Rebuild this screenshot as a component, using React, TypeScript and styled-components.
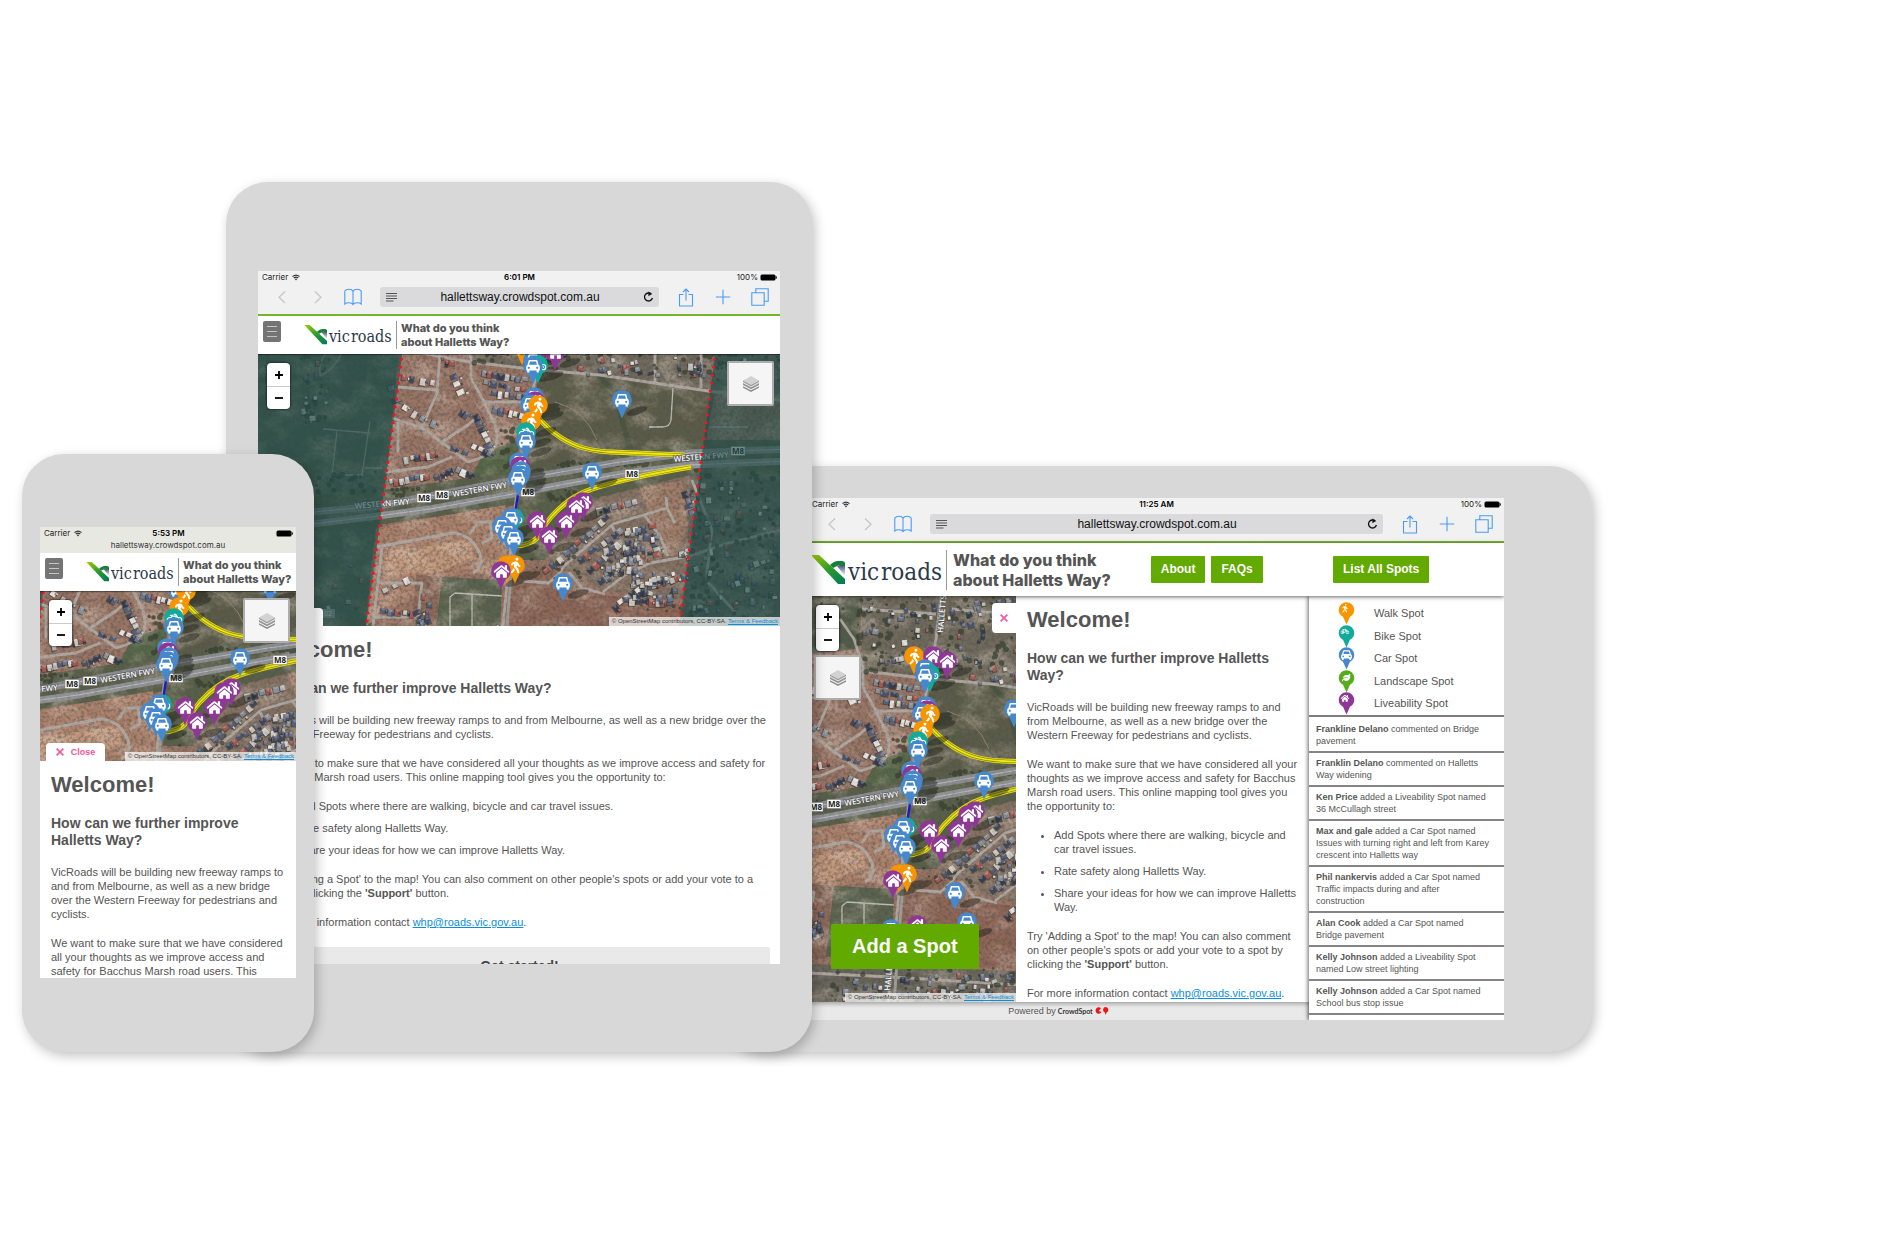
import React, { useId } from 'react';
import styled, { createGlobalStyle } from 'styled-components';
import { FaHome, FaBicycle, FaWalking, FaLeaf } from 'react-icons/fa';

const sans = `'Liberation Sans', Arial, sans-serif`;
const system = `Inter, Roboto, 'Liberation Sans', sans-serif`;
const green = '#62a900';

const GlobalStyle = createGlobalStyle`
  *, *::before, *::after { box-sizing: border-box; }
  body { margin: 0; background: #fff; color: #555; font-family: ${sans}; }
  button, input { font: inherit; margin: 0; }
  button { cursor: pointer; border: 0; padding: 0; }
`;

/* ---------- device frames ---------- */

const Stage = styled.main`
  display: flex;
  align-items: flex-end;
  padding: 182px 22px 198px;
  overflow: hidden;
`;

const Device = styled.section<{ $width: number; $pad: string; $overlap?: number; $layer: number }>`
  position: relative;
  z-index: ${p => p.$layer};
  flex: 0 1 ${p => p.$width}px;
  min-width: 0;
  margin-left: ${p => -(p.$overlap ?? 0)}px;
  padding: ${p => p.$pad};
  border-radius: 42px;
  background: #d8d8d8;
  box-shadow: 3px 4px 12px rgba(0, 0, 0, 0.24);
`;

const Screen = styled.div<{ $height: number }>`
  display: flex;
  flex-direction: column;
  height: ${p => p.$height}px;
  overflow: hidden;
  background: #fff;
`;

/* ---------- browser chrome ---------- */

const StatusBar = styled.div<{ $tint?: string }>`
  display: grid;
  grid-template-columns: 1fr auto 1fr;
  align-items: center;
  flex: none;
  height: 13px;
  padding: 0 3px 0 4px;
  background: ${p => p.$tint ?? '#f1f1f1'};
  color: #222;
  font: 400 8px/13px ${system};
`;

const Carrier = styled.span`
  display: flex;
  align-items: center;
  gap: 4px;
`;

const Clock = styled.span`
  font-weight: 600;
  color: #000;
`;

const Battery = styled.span`
  display: flex;
  align-items: center;
  justify-content: flex-end;
  gap: 2px;
`;

const Toolbar = styled.div`
  display: flex;
  align-items: center;
  flex: none;
  padding: 3px 11px 7px 15px;
  background: #f1f1f1;
  border-bottom: 2px solid #74b52c;
  box-sizing: content-box;
  height: 20px;
`;

const ToolGroup = styled.div<{ $end?: boolean }>`
  display: flex;
  align-items: center;
  justify-content: space-between;
  width: ${p => (p.$end ? 91 : 89)}px;
  margin: ${p => (p.$end ? '0 0 0 19px' : '0 18px 0 0')};
`;

const ToolButton = styled.button`
  display: flex;
  background: none;
  color: #4a9bf5;
  &:disabled { color: #c6c6c6; }
`;

const Address = styled.form`
  display: flex;
  align-items: center;
  flex: 1;
  min-width: 0;
  height: 20px;
  padding: 0 5px 0 6px;
  border-radius: 3px;
  background: #dadadc;
`;

const AddressInput = styled.input`
  flex: 1;
  min-width: 0;
  border: 0;
  padding: 0;
  background: none;
  text-align: center;
  color: #111;
  font: 400 12px/20px ${sans};
`;

const PhoneAddress = styled.div`
  flex: none;
  height: 13px;
  background: #e8e8e2;
  color: #333;
  text-align: center;
  font: 400 8px/10px ${system};
`;

const WifiIcon = () => (
  <svg width="8" height="7" viewBox="0 0 16 13" aria-hidden="true">
    <g fill="none" stroke="#333" strokeWidth="2.2">
      <path d="M1 4.6Q8-1.2 15 4.6" />
      <path d="M3.6 7.6Q8 4 12.4 7.6" />
    </g>
    <path d="M5.6 9.6Q8 7.8 10.4 9.6L8 12.4Z" fill="#333" />
  </svg>
);

const BatteryIcon = () => (
  <svg width="17" height="7" viewBox="0 0 17 7" aria-hidden="true">
    <rect x="0.5" y="0.5" width="15" height="6" rx="1.5" fill="#000" />
    <path d="M16 2.3Q17 3.5 16 4.7Z" fill="#000" stroke="#000" strokeWidth=".6" />
  </svg>
);

const Chevron = ({ flip }: { flip?: boolean }) => (
  <svg width="17" height="16" viewBox="0 0 17 16" fill="none" stroke="currentColor" strokeWidth="1.3" aria-hidden="true">
    <path d={flip ? 'M6 2.5L12 8.3L6 14' : 'M12 2.5L6 8.3L12 14'} />
  </svg>
);

const BookIcon = () => (
  <svg width="18" height="18" viewBox="0 0 18 18" fill="none" stroke="currentColor" strokeWidth="1.1" aria-hidden="true">
    <path d="M9 3.2Q8 1.2 5 1.2T.8 3V16Q2 14.8 5 14.8T9 16.6Q10 14.8 13 14.8T17.2 16V3Q16 1.2 13 1.2T9 3.2V16.6" />
  </svg>
);

const ReaderIcon = () => (
  <svg width="11" height="9" viewBox="0 0 11 9" stroke="#555" strokeWidth="1" aria-hidden="true">
    <path d="M0 .5H11M0 3H11M0 5.5H11M0 8H7.5" />
  </svg>
);

const ReloadIcon = () => (
  <svg width="11" height="12" viewBox="0 0 11 12" fill="none" stroke="#111" strokeWidth="1.3" aria-hidden="true">
    <path d="M8.4 3.2A4 4 0 1 0 9.4 7" />
    <path d="M5.4.6L8.8 3.1L5.4 5.2Z" fill="#111" stroke="none" />
  </svg>
);

const ShareIcon = () => (
  <svg width="16" height="19" viewBox="0 0 16 19" fill="none" stroke="currentColor" strokeWidth="1.1" aria-hidden="true">
    <path d="M5.5 6.5H1.5V18H14.5V6.5H10.5M8 12.5V1.2M5 4L8 1L11 4" />
  </svg>
);

const PlusIcon = () => (
  <svg width="16" height="16" viewBox="0 0 16 16" stroke="currentColor" strokeWidth="1.1" aria-hidden="true">
    <path d="M8 .8V15.2M.8 8H15.2" />
  </svg>
);

const TabsIcon = () => (
  <svg width="18" height="18" viewBox="0 0 18 18" fill="none" stroke="currentColor" strokeWidth="1.1" aria-hidden="true">
    <path d="M.8 4.8H13.2V17.2H.8ZM4.8 4.8V.8H17.2V13.2H13.2" />
  </svg>
);

function BrowserBar({ time }: { time: string }) {
  const id = useId();
  return (
    <>
      <StatusBar>
        <Carrier>Carrier <WifiIcon /></Carrier>
        <Clock>{time}</Clock>
        <Battery>100% <BatteryIcon /></Battery>
      </StatusBar>
      <Toolbar>
        <ToolGroup>
          <ToolButton disabled aria-label="Back"><Chevron /></ToolButton>
          <ToolButton disabled aria-label="Forward"><Chevron flip /></ToolButton>
          <ToolButton aria-label="Bookmarks"><BookIcon /></ToolButton>
        </ToolGroup>
        <Address onSubmit={e => e.preventDefault()}>
          <ReaderIcon />
          <AddressInput id={id} aria-label="Address" defaultValue="hallettsway.crowdspot.com.au" />
          <ToolButton type="button" aria-label="Reload"><ReloadIcon /></ToolButton>
        </Address>
        <ToolGroup $end>
          <ToolButton aria-label="Share"><ShareIcon /></ToolButton>
          <ToolButton aria-label="New tab"><PlusIcon /></ToolButton>
          <ToolButton aria-label="Tabs"><TabsIcon /></ToolButton>
        </ToolGroup>
      </Toolbar>
    </>
  );
}

/* ---------- site header ---------- */

const Header = styled.header<{ $wide?: boolean }>`
  display: flex;
  align-items: center;
  flex: none;
  position: relative;
  z-index: 2;
  height: ${p => (p.$wide ? 53 : 38)}px;
  padding-left: ${p => (p.$wide ? 3 : 5)}px;
  background: #fff;
  box-shadow: 0 1px ${p => (p.$wide ? '4px rgba(0, 0, 0, 0.6)' : '1px rgba(0, 0, 0, 0.4)')};
`;

const MenuButton = styled.button`
  display: flex;
  align-items: center;
  justify-content: center;
  align-self: flex-start;
  width: 18px;
  height: 21px;
  margin: 5px 22px 0 0;
  border-radius: 2px;
  background: #747474;
`;

const Brand = styled.a<{ $wide?: boolean }>`
  display: flex;
  align-items: center;
  gap: ${p => (p.$wide ? 4 : 3)}px;
  color: #555;
  text-decoration: none;
`;

const BrandTitle = styled.h1<{ $wide?: boolean }>`
  margin: 0;
  padding-left: ${p => (p.$wide ? 6 : 4)}px;
  border-left: 1px solid #999;
  font: 800 ${p => (p.$wide ? '16px/20px' : '11px/14px')} ${system};
  white-space: nowrap;
`;

const HeaderNav = styled.nav`
  display: flex;
  flex: 1;
  gap: 6px;
  padding-left: 40px;
`;

const GreenButton = styled.button<{ $large?: boolean }>`
  padding: ${p => (p.$large ? '0 21px' : '0 10px')};
  border-radius: 1px;
  background: ${green};
  color: #fff;
  font: 700 ${p => (p.$large ? '20px/45px' : '12px/27px')} ${sans};
  white-space: nowrap;
`;

const HeaderEnd = styled.div`
  width: 171px;
`;

function Logo({ wide }: { wide?: boolean }) {
  const id = useId().replace(/:/g, '');
  return (
    <svg width={wide ? 131 : 90} height={wide ? 30 : 20} viewBox="0 0 131 30" role="img" aria-label="VicRoads">
      <defs>
        <linearGradient id={`${id}s`} x1="0" y1="0" x2="1" y2="1">
          <stop offset="0" stopColor="#a8cf00" />
          <stop offset=".5" stopColor="#2f9a2d" />
          <stop offset="1" stopColor="#00795a" />
        </linearGradient>
        <linearGradient id={`${id}f`} x1="0" y1="0" x2="0" y2="1">
          <stop offset="0" stopColor="#173a3c" />
          <stop offset=".4" stopColor="#7680a0" />
          <stop offset="1" stopColor="#ffffff" />
        </linearGradient>
      </defs>
      <path d="M26 11L34 8V21Z" fill={`url(#${id}f)`} />
      <path d="M19 10Q23 6 27 6H31Q34 6 34 9V10L28 10L22 13Z" fill="#15803a" />
      <path d="M0 0H8L34 24V29H27Z" fill={`url(#${id}s)`} />
      <g fill="#2b3a49" fontFamily="'DejaVu Serif Condensed', 'DejaVu Serif', serif" fontSize="24">
        <text x="37" y="25">vic</text>
        <text x="70" y="25">roads</text>
      </g>
    </svg>
  );
}

function SiteBrand({ wide }: { wide?: boolean }) {
  return (
    <Brand href="#home" $wide={wide}>
      <Logo wide={wide} />
      <BrandTitle $wide={wide}>What do you think<br />about Halletts Way?</BrandTitle>
    </Brand>
  );
}

const CompactHeader = () => (
  <Header>
    <MenuButton aria-label="Menu">
      <svg width="10" height="13" viewBox="0 0 10 13" stroke="#c4c4c4" strokeWidth="1.2" aria-hidden="true">
        <path d="M0 1.5H10M0 6.5H10M0 11.5H10" />
      </svg>
    </MenuButton>
    <SiteBrand />
  </Header>
);

/* ---------- pins ---------- */

type Kind = 'walk' | 'bike' | 'car' | 'leaf' | 'home';

const pinColour: Record<Kind, string> = {
  walk: '#f79500',
  bike: '#12aa9b',
  car: '#4788cc',
  leaf: '#56ad1b',
  home: '#8f3796',
};

const pinGlyph = { walk: FaWalking, bike: FaBicycle, leaf: FaLeaf, home: FaHome };
const glyphSize = { walk: 15, bike: 15, leaf: 12, home: 15 };

const CarGlyph = () => (
  <g>
    <path d="M-4.8-1L-3.6-5.2H3.6L4.8-1" fill="none" stroke="#fff" strokeWidth="1.5" strokeLinejoin="round" />
    <path d="M-5.2-1.2H5.2Q6.8-.6 6.8 1V4.6H5.8V6.4H3.6V4.6H-3.6V6.4H-5.8V4.6H-6.8V1Q-6.8-.6-5.2-1.2Z" fill="#fff" />
    <circle cx="-4.2" cy="1.8" r="1.1" fill={pinColour.car} />
    <circle cx="4.2" cy="1.8" r="1.1" fill={pinColour.car} />
  </g>
);

function PinShape({ kind }: { kind: Kind }) {
  let glyph = <CarGlyph />;
  if (kind !== 'car') {
    const Glyph = pinGlyph[kind];
    const s = glyphSize[kind];
    glyph = <Glyph x={-s / 2} y={-s / 2} width={s} height={s} color="#fff" />;
  }
  return (
    <>
      <path d="M-9.8 0A9.8 9.8 0 1 1 9.8 0Q9.6 6 4.4 8.6L0 18.5L-4.4 8.6Q-9.6 6-9.8 0Z" fill={pinColour[kind]} />
      {glyph}
    </>
  );
}

type Pin = [Kind, number, number];

const corridorPins: Pin[] = [
  ['walk', 522, 347], ['home', 541, 347], ['home', 555, 352], ['car', 533, 360], ['bike', 538, 365], ['car', 533, 366],
  ['car', 622, 400], ['car', 534, 397], ['home', 535, 401], ['car', 530, 404], ['walk', 538, 405], ['walk', 531, 421],
  ['bike', 526, 432], ['car', 526, 441], ['car', 519, 462], ['home', 520, 466], ['car', 521, 471], ['car', 520, 475],
  ['car', 518, 478], ['car', 592, 472], ['home', 583, 502], ['home', 576, 506], ['bike', 514, 518], ['car', 511, 518],
  ['home', 566, 521], ['home', 537, 521], ['car', 502, 526], ['car', 508, 532], ['home', 549, 536], ['car', 514, 538],
];

const midPins: Pin[] = [...corridorPins, ['walk', 507, 565], ['walk', 515, 565], ['home', 501, 571], ['car', 563, 583]];

const allPins: Pin[] = [...midPins, ['car', 575, 613], ['home', 525, 616], ['car', 499, 620]];

/* ---------- aerial map ---------- */

function random(seed: number) {
  let s = seed;
  return () => {
    s = (s * 16807) % 2147483647;
    return s / 2147483647;
  };
}

type Roof = { x: number; y: number; w: number; h: number; a: number; fill: string };
const roofs = ['#3d465c', '#566079', '#6d7791', '#343b4e', '#bdbbb9', '#e4dfda', '#485470', '#a35a52', '#8a8f99', '#cfc9c3'];

/* rows: x1, y1, x2, y2, number of roofs */
const rows = [
  [404, 457, 430, 452, 6], [389, 480, 424, 474, 8], [434, 476, 446, 471, 3], [457, 466, 468, 471, 3],
  [482, 371, 522, 377, 8], [484, 380, 522, 387, 6], [492, 391, 523, 394, 6], [494, 406, 520, 413, 6],
  [478, 415, 491, 443, 6], [474, 444, 488, 451, 4], [402, 375, 430, 380, 4], [405, 404, 422, 415, 3],
  [456, 374, 462, 388, 3], [463, 410, 466, 412, 2], [452, 445, 464, 450, 2], [380, 608, 410, 611, 5],
  [419, 610, 426, 624, 4], [381, 590, 402, 579, 3], [394, 385, 398, 398, 2], [432, 420, 437, 422, 1],
  [543, 570, 556, 560, 3], [562, 552, 602, 518, 8], [596, 508, 632, 500, 6], [578, 560, 616, 530, 8],
  [626, 528, 648, 524, 4], [586, 570, 612, 546, 6], [597, 580, 622, 560, 6], [612, 606, 640, 585, 6],
  [650, 582, 680, 574, 5], [624, 598, 668, 600, 8], [655, 535, 660, 552, 4], [688, 492, 694, 510, 4],
];

/* blocks: x, y, width, height, number of roofs */
const blocks = [
  [470, 288, 72, 66, 34], [552, 288, 165, 66, 70], [575, 357, 135, 18, 34], [430, 356, 34, 8, 4],
  [620, 528, 36, 32, 34], [600, 545, 38, 28, 30], [630, 572, 44, 28, 40], [676, 545, 12, 16, 8],
  [692, 480, 90, 130, 80], [720, 358, 60, 22, 22], [450, 664, 172, 30, 60], [416, 600, 12, 26, 6],
  [300, 360, 26, 60, 14], [322, 560, 40, 50, 6], [416, 590, 6, 40, 4],
];

function buildRoofs(): Roof[] {
  const rnd = random(4271);
  const out: Roof[] = [];
  const add = (x: number, y: number, a: number, k: number) =>
    out.push({ x, y, w: (3.5 + rnd() * 2.5) * k, h: (3.5 + rnd() * 3.5) * k, a, fill: roofs[Math.floor(rnd() * roofs.length)] });
  rows.forEach(([x1, y1, x2, y2, n]) => {
    const a = (Math.atan2(y2 - y1, x2 - x1) * 180) / Math.PI;
    for (let i = 0; i < n; i++) {
      const t = n > 1 ? i / (n - 1) : 0;
      const x = x1 + (x2 - x1) * t + rnd() * 2 - 1;
      const y = y1 + (y2 - y1) * t + rnd() * 2 - 1;
      add(x, y, a, 1.1);
      if (rnd() > 0.4) add(x + 4 + rnd() * 2, y + 3, a, 0.4);
    }
  });
  blocks.forEach(([x, y, w, h, n]) => {
    for (let i = 0; i < n; i++) add(x + rnd() * w, y + rnd() * h, rnd() * 30 - 20, 0.5 + rnd() * 0.6);
  });
  return out;
}

function buildTrees() {
  const rnd = random(917);
  const zones = [
    [466, 287, 160, 76, 120], [626, 287, 94, 90, 70], [412, 290, 60, 50, 10], [440, 655, 185, 40, 70], [690, 470, 92, 150, 110],
    [550, 462, 100, 5, 30], [690, 354, 90, 30, 40], [300, 354, 30, 70, 24], [545, 490, 30, 12, 16], [500, 424, 14, 46, 16],
    [530, 545, 50, 35, 18], [630, 590, 50, 22, 18], [316, 470, 60, 22, 20], [390, 488, 40, 8, 16],
  ];
  return zones.flatMap(([x, y, w, h, n]) =>
    Array.from({ length: n }, () => ({ x: x + rnd() * w, y: y + rnd() * h, r: 1 + rnd() * 2 })),
  );
}

const roofList = buildRoofs();
const treeList = buildTrees();

const roads = [
  'M440 354L437 393L422 427', 'M392 418L422 428L448 447L468 462Q484 458 492 450T495 425L484 402L471 378V358L462 330L448 310',
  'M385 472L428 467L452 457', 'M442 442L468 425L478 416', 'M485 402H525', 'M398 387L436 390', 'M398 422V452',
  'M377 547L452 533Q470 534 478 550T473 573', 'M470 534L478 522H490L492 537L482 544', 'M382 547L373 626',
  'M378 583L422 583L418 617H372', 'M416 352L470 362L540 370L600 375L715 392L780 400', 'M549 287L544 330L537 370L524 435L517 492L511 545L503 625L496 694',
  'M523 581L548 583Q556 578 566 564L613 524L640 516L667 508', 'M667 508L666 497M667 508L675 523',
  'M645 516L660 536L668 556', 'M603 592L625 575L650 563L690 556L725 544L780 530', 'M612 526L622 546L634 560',
  'M655 287V382M701 354V388', 'M416 664L500 668L625 676', 'M470 300L544 305M560 300L625 306', 'M569 572L582 588L605 594',
  'M692 480L712 530L706 580L735 612',
];

const Landscape = React.memo(function Landscape({ pins }: { pins: Pin[] }) {
  const id = useId().replace(/:/g, '');
  return (
    <>
      <defs>
        <filter id={`${id}n`} x="0" y="0" width="100%" height="100%">
          <feTurbulence type="fractalNoise" baseFrequency=".3" numOctaves="3" seed="7" />
          <feColorMatrix values="0 0 0 0 .08  0 0 0 0 .08  0 0 0 0 .07  1.8 0 0 0 -.75" />
        </filter>
        <filter id={`${id}w`} x="0" y="0" width="100%" height="100%">
          <feTurbulence type="fractalNoise" baseFrequency=".035 .05" numOctaves="4" seed="3" />
          <feColorMatrix values="0 0 0 0 .8  0 0 0 0 .66  0 0 0 0 .56  0 1.9 0 0 -.82" />
        </filter>
      </defs>
      <rect x="250" y="280" width="540" height="420" fill="#9a7565" />
      <path d="M250 280H405L372 640H250Z" fill="#566350" />
      <path d="M405 280H472L466 340L416 345Z" fill="#515c48" />
      <path d="M472 280H790V395L715 390L535 368L468 360Z" fill="#706a5c" />
      <path d="M540 371L600 376L715 392L704 450L600 465L517 478Z" fill="#5b5c48" />
      <path d="M598 376L615 392L622 420L632 455" stroke="#4a553f" strokeWidth="5" fill="none" />
      <path d="M484 452L520 440L516 470L470 480Z" fill="#566848" />
      <path d="M250 503L400 488L520 470L700 440H790V475L690 480L600 497L545 560L515 560L517 505L378 525L250 535Z" fill="#596049" />
      <path d="M376 528L505 505L508 572L440 577L366 626L372 560Z" fill="#ad826c" />
      <path d="M386 552L470 540L474 556L440 572L386 575Z" fill="#c2977b" />
      <path d="M442 577L502 580L500 640L420 650L437 620Z" fill="#59634d" />
      <path d="M545 560L600 497L690 475L686 600L600 590Z" fill="#857162" />
      <path d="M520 585L600 594L686 606L684 662L500 655L505 590Z" fill="#8f6657" />
      <path d="M530 592L545 586L558 572L538 566L518 576Z" fill="#8f6a57" />
      <path d="M640 488L682 480L688 525L672 560L650 520Z" fill="#a07d69" />
      <path d="M416 655L625 662V700H416Z" fill="#68645a" />
      <path d="M416 575L440 577L434 650H410Z" fill="#8d6a5a" />
      <path d="M690 475H790V640H684Z" fill="#64645a" />
      <rect x="250" y="280" width="540" height="420" filter={`url(#${id}w)`} opacity=".55" />
      <rect x="250" y="280" width="540" height="420" filter={`url(#${id}n)`} opacity=".6" />
      <g fill="none" stroke="#aea7a1" strokeWidth="2.8" strokeLinejoin="round">
        {roads.map(d => <path key={d} d={d} />)}
      </g>
      <g fill="none" stroke="#bcbeb2" strokeWidth="1.3">
        <path d="M450 627V597L455 593L502 596M472 595V627M673 388L671 420Q670 427 662 427H649M710 427H748" />
        <path d="M323 429L370 433M337 431L332 475H362L370 421M365 468H382" opacity=".7" />
        <path d="M320 376Q336 368 341 354M320 376Q318 362 326 354" strokeWidth="2" opacity=".5" />
      </g>
      <path d="M555 402Q585 410 597 440" fill="none" stroke="#a18c77" strokeWidth=".8" />
      <g fill="#333d2d" opacity=".7">
        {treeList.map((t, i) => <circle key={i} cx={t.x} cy={t.y} r={t.r} />)}
      </g>
      {roofList.map((r, i) => (
        <g key={i} transform={`translate(${r.x} ${r.y}) rotate(${r.a})`}>
          <rect x="-1" y="0" width={r.w + 1} height={r.h + 1} fill="#20231f" opacity=".5" />
          <rect width={r.w} height={r.h} fill={r.fill} />
          <path d={`M0 0L${r.w} 0L${r.w / 2} ${r.h / 2}Z`} fill="#fff" opacity=".25" />
        </g>
      ))}
      <g fill="none">
        <path d="M250 517L313 512L378 506L430 496L520 479L620 462L690 453L790 449" stroke="#8b8d90" strokeWidth="7" />
        <path d="M250 530L313 524L378 516L430 509L518 493L560 485L620 474L690 465L790 461" stroke="#919396" strokeWidth="7" />
        <path d="M250 517L313 512L378 506L430 496L520 479L620 462L690 453L790 449M250 530L313 524L378 516L430 509L518 493L560 485L620 474L690 465L790 461" stroke="#c4c5c5" strokeWidth=".8" />
        <path d="M502 694L509 600L516 505L524 435" stroke="#a09d96" strokeWidth="3" />
      </g>
      <rect x="250" y="280" width="540" height="420" filter={`url(#${id}n)`} opacity=".3" />
      <g fill="none">
        <g stroke="#e6dc10" strokeWidth="5">
          <path d="M534 412Q552 437 580 447Q592 451 610 452L685 455" />
          <path d="M514 546Q531 545 537 538Q542 528 552 516Q570 496 592 489Q625 478 691 467" />
        </g>
        <g stroke="#8a8a12" strokeWidth="3">
          <path d="M534 412Q552 437 580 447Q592 451 610 452L685 455" />
          <path d="M514 546Q531 545 537 538Q542 528 552 516Q570 496 592 489Q625 478 691 467" />
        </g>
        <g stroke="#f0e614" strokeWidth="1.8">
          <path d="M534 412Q552 437 580 447Q592 451 610 452L685 455" />
          <path d="M514 546Q531 545 537 538Q542 528 552 516Q570 496 592 489Q625 478 691 467" />
        </g>
        <path d="M519 488L515 514" stroke="#1a1ac8" strokeWidth="2.4" />
      </g>
      <g fill="#fff" stroke="#5c5e60" strokeWidth="1.6" paintOrder="stroke" fontFamily="'Noto Sans', sans-serif" fontWeight="500" fontSize="8">
        <text x="355" y="509" transform="rotate(-5 355 509)">WESTERN FWY</text>
        <text x="453" y="497" transform="rotate(-10 453 497)">WESTERN FWY</text>
        <text x="674" y="462" transform="rotate(-5 674 462)">WESTERN FWY</text>
        <text x="551" y="324" transform="rotate(-85 551 324)">HALLETTS WAY</text>
        <text x="498" y="682" transform="rotate(-85 498 682)">HALLETTS WAY</text>
      </g>
      {[[424, 498], [442, 495], [528, 492], [632, 474], [738, 451]].map(([x, y]) => (
        <g key={x} transform={`translate(${x} ${y})`}>
          <rect x="-7" y="-4.5" width="14" height="9" fill="#fff" stroke="#777" strokeWidth=".5" />
          <text y="3" textAnchor="middle" fontSize="8" fontWeight="700" fontFamily="'Noto Sans', sans-serif" fill="#222">M8</text>
        </g>
      ))}
      <rect x="318" y="609" width="17" height="9" fill="#9aa5a1" />
      <text x="324" y="616" fontSize="7" fontFamily="'Noto Sans', sans-serif" fill="#eee">02</text>
      <path d="M250 280H412L363 650H250ZM725 280H790V650H676Z" fill="#1f4a47" opacity=".64" />
      <path d="M412 280L363 650M725 280L676 650" stroke="#ee1527" strokeWidth="3.2" strokeLinecap="round" strokeDasharray="0 8" />
      <g fill="#1c1f18" opacity=".45">
        {pins.map(([, x, y], i) => (
          <ellipse key={i} cx={x + 15} cy={y + 11} rx="11" ry="3.6" transform={`rotate(-18 ${x + 15} ${y + 11})`} />
        ))}
      </g>
      {pins.map(([kind, x, y], i) => (
        <g key={i} transform={`translate(${x} ${y})`}><PinShape kind={kind} /></g>
      ))}
    </>
  );
});

const MapArea = styled.div<{ $height?: number }>`
  position: relative;
  flex: none;
  min-width: 0;
  height: ${p => (p.$height ? `${p.$height}px` : 'auto')};
  overflow: hidden;
  background: #6b6256;
`;

const Aerial = styled.svg`
  position: absolute;
  inset: 0;
  width: 100%;
  height: 100%;
`;

const ZoomControl = styled.div<{ $side?: boolean }>`
  position: absolute;
  top: 9px;
  left: ${p => (p.$side ? 8 : 9)}px;
  display: grid;
  width: 23px;
  border-radius: 4px;
  background: #fff;
  box-shadow: 0 0 2px 1px rgba(0, 0, 0, 0.45);
`;

const ZoomButton = styled.button`
  display: flex;
  align-items: center;
  justify-content: center;
  height: 23px;
  background: none;
  & + & { border-top: 1px solid #ccc; }
`;

const LayersButton = styled.button<{ $side?: boolean }>`
  position: absolute;
  top: ${p => (p.$side ? 59 : 7)}px;
  ${p => (p.$side ? 'left: 6px;' : 'right: 6px;')}
  display: flex;
  align-items: center;
  justify-content: center;
  width: 47px;
  height: 45px;
  border: 2px solid #adadad;
  border-radius: 2px;
  background: #f5f5f5;
`;

const Attribution = styled.small`
  position: absolute;
  right: 0;
  bottom: 0;
  padding: 0 2px 0 3px;
  background: rgba(255, 255, 255, 0.7);
  color: #333;
  font: 400 6px/9px ${sans};
  white-space: nowrap;
`;

const Link = styled.a`
  color: #0a8fdb;
  text-decoration: underline;
`;

const AddSpot = styled.div`
  position: absolute;
  left: 23px;
  bottom: 33px;
`;

function MapView({ view, height, side, pins, children }: {
  view: string; height?: number; side?: boolean; pins: Pin[]; children?: React.ReactNode;
}) {
  return (
    <MapArea $height={height}>
      <Aerial viewBox={view} preserveAspectRatio="xMinYMin slice" role="img" aria-label="Aerial map of spots along Halletts Way">
        <Landscape pins={pins} />
      </Aerial>
      <ZoomControl $side={side}>
        <ZoomButton aria-label="Zoom in">
          <svg width="8" height="8" viewBox="0 0 8 8" stroke="#000" strokeWidth="1.8"><path d="M4 0V8M0 4H8" /></svg>
        </ZoomButton>
        <ZoomButton aria-label="Zoom out">
          <svg width="8" height="8" viewBox="0 0 8 8" stroke="#000" strokeWidth="1.8"><path d="M0 4H8" /></svg>
        </ZoomButton>
      </ZoomControl>
      <LayersButton $side={side} aria-label="Map layers">
        <svg width="18" height="16" viewBox="0 0 20 18" aria-hidden="true">
          <path d="M1 11.5L10 16L19 11.5V13.2L10 18L1 13.2Z" fill="#8d8d8d" />
          <path d="M1 8L10 12.7L19 8V10L10 15L1 10Z" fill="#969696" />
          <path d="M1 5L10 9.4L19 5V6.8L10 11.8L1 6.8Z" fill="#9d9d9d" />
          <path d="M10 0L19 5L10 10L1 5Z" fill="#d2d2d2" />
        </svg>
      </LayersButton>
      <Attribution>© OpenStreetMap contributors, CC-BY-SA. <Link href="#terms">Terms &amp; Feedback</Link></Attribution>
      {children}
    </MapArea>
  );
}

/* ---------- welcome panel ---------- */

const CloseTab = styled.button<{ $side?: boolean }>`
  position: absolute;
  ${p => (p.$side ? 'top: 7px; right: 0;' : 'bottom: 0; left: 6px;')}
  display: flex;
  align-items: center;
  justify-content: center;
  gap: 7px;
  width: ${p => (p.$side ? 24 : 59)}px;
  height: ${p => (p.$side ? 30 : 18)}px;
  border-radius: ${p => (p.$side ? '4px 0 0 4px' : '4px 4px 0 0')};
  background: #fff;
  color: #f2589b;
  font: 700 9px/18px ${sans};
`;

const Cross = () => (
  <svg width="8" height="8" viewBox="0 0 8 8" stroke="currentColor" strokeWidth="1.6" aria-hidden="true">
    <path d="M.6.6L7.4 7.4M7.4.6L.6 7.4" />
  </svg>
);

const Panel = styled.article`
  flex: 1;
  min-height: 0;
  min-width: 0;
  padding: 10px 10px 0 11px;
  overflow: hidden;
  background: #fff;
  font: 400 11px/14px ${sans};
  h2 { margin: 0 0 16px; font-size: 22px; line-height: 28px; }
  h3 { margin: 0 0 16px; font-size: 14px; line-height: 17px; }
  p { margin: 0 0 15px; }
  ul { margin: 0 0 15px; padding-left: 27px; }
  li + li { margin-top: 8px; }
`;

const GetStarted = styled.button`
  display: block;
  width: 100%;
  margin-top: 18px;
  border-radius: 2px;
  background: #e9e9e9;
  color: #444;
  font: 700 14px/38px ${sans};
`;

const Welcome = ({ children }: { children?: React.ReactNode }) => (
  <Panel>
    <h2>Welcome!</h2>
    <h3>How can we further improve Halletts Way?</h3>
    <p>VicRoads will be building new freeway ramps to and from Melbourne, as well as a new bridge over the Western Freeway for pedestrians and cyclists.</p>
    <p>We want to make sure that we have considered all your thoughts as we improve access and safety for Bacchus Marsh road users. This online mapping tool gives you the opportunity to:</p>
    <ul>
      <li>Add Spots where there are walking, bicycle and car travel issues.</li>
      <li>Rate safety along Halletts Way.</li>
      <li>Share your ideas for how we can improve Halletts Way.</li>
    </ul>
    <p>Try 'Adding a Spot' to the map! You can also comment on other people's spots or add your vote to a spot by clicking the <b>'Support'</b> button.</p>
    <p>For more information contact <Link href="mailto:whp@roads.vic.gov.au">whp@roads.vic.gov.au</Link>.</p>
    {children}
  </Panel>
);

/* ---------- wide layout ---------- */

const WideBody = styled.div`
  display: grid;
  grid-template-columns: minmax(0, 1fr) 195px;
  grid-template-rows: minmax(0, 1fr);
  flex: 1;
  min-height: 0;
`;

const MainColumn = styled.div`
  display: grid;
  grid-template-columns: minmax(0, 1fr) 293px;
  grid-template-rows: minmax(0, 1fr) 18px;
  min-height: 0;
`;

const Footer = styled.footer`
  grid-column: 1 / -1;
  display: flex;
  align-items: center;
  justify-content: center;
  gap: 2px;
  background: #e9e9e9;
  box-shadow: inset 0 3px 4px -1px rgba(0, 0, 0, 0.3);
  font: 400 9px/18px ${sans};
  b { color: #333; font: 700 7px/18px Lato, ${sans}; }
`;

const Sidebar = styled.aside`
  position: relative;
  min-height: 0;
  background: #fff;
  box-shadow: -1px 0 4px rgba(0, 0, 0, 0.6);
`;

const Legend = styled.ul`
  display: grid;
  grid-template-rows: repeat(5, minmax(0, 1fr));
  height: 119px;
  margin: 0;
  padding: 6px 0 0;
  list-style: none;
  font: 400 11px/22px ${sans};
`;

const LegendItem = styled.li`
  display: grid;
  grid-template-columns: 17px 1fr;
  gap: 19px;
  padding-left: 29px;
`;

const Activity = styled.ul`
  margin: 0;
  padding: 2px 0 0;
  list-style: none;
  border-top: 2px solid #7d7d7d;
  font: 400 9px/12px ${sans};
`;

const ActivityItem = styled.li`
  padding: 4px 4px 4px 7px;
  border-bottom: 2px solid #858585;
  white-space: pre-line;
`;

const legend: [Kind, string][] = [
  ['walk', 'Walk Spot'], ['bike', 'Bike Spot'], ['car', 'Car Spot'], ['leaf', 'Landscape Spot'], ['home', 'Liveability Spot'],
];

const activity: [string, string][] = [
  ['Frankline Delano', 'commented on Bridge\npavement'],
  ['Franklin Delano', 'commented on Halletts\nWay widening'],
  ['Ken Price', 'added a Liveability Spot named\n36 McCullagh street'],
  ['Max and gale', 'added a Car Spot named\nIssues with turning right and left from Karey\ncrescent into Halletts way'],
  ['Phil nankervis', 'added a Car Spot named\nTraffic impacts during and after\nconstruction'],
  ['Alan Cook', 'added a Car Spot named\nBridge pavement'],
  ['Kelly Johnson', 'added a Liveability Spot\nnamed Low street lighting'],
  ['Kelly Johnson', 'added a Car Spot named\nSchool bus stop issue'],
];

const Phone = () => (
  <Device $width={292} $pad="73px 18px 74px" $layer={3}>
    <Screen $height={451}>
      <StatusBar $tint="#e8e8e2">
        <Carrier>Carrier <WifiIcon /></Carrier>
        <Clock>5:53 PM</Clock>
        <Battery><BatteryIcon /></Battery>
      </StatusBar>
      <PhoneAddress>hallettsway.crowdspot.com.au</PhoneAddress>
      <CompactHeader />
      <MapView view="392 405 256 170" height={170} pins={corridorPins}>
        <CloseTab><Cross />Close</CloseTab>
      </MapView>
      <Welcome />
    </Screen>
  </Device>
);

const Tablet = () => (
  <Device $width={586} $pad="89px 32px 88px" $overlap={88} $layer={2}>
    <Screen $height={693}>
      <BrowserBar time="6:01 PM" />
      <CompactHeader />
      <MapView view="258 354 522 272" height={272} pins={midPins}>
        <CloseTab><Cross />Close</CloseTab>
      </MapView>
      <Welcome><GetStarted>Get started!</GetStarted></Welcome>
    </Screen>
  </Device>
);

const WideTablet = () => (
  <Device $width={872} $pad="32px 88px" $overlap={92} $layer={1}>
    <Screen $height={522}>
      <BrowserBar time="11:25 AM" />
      <Header $wide>
        <SiteBrand wide />
        <HeaderNav>
          <GreenButton>About</GreenButton>
          <GreenButton>FAQs</GreenButton>
        </HeaderNav>
        <HeaderEnd><GreenButton>List All Spots</GreenButton></HeaderEnd>
      </Header>
      <WideBody>
        <MainColumn>
          <MapView view="416 287 208 406" side pins={allPins}>
            <CloseTab $side aria-label="Close"><Cross /></CloseTab>
            <AddSpot><GreenButton $large>Add a Spot</GreenButton></AddSpot>
          </MapView>
          <Welcome />
          <Footer>
            Powered by <b>CrowdSpot</b>
            <svg width="14" height="8" viewBox="0 0 14 8" aria-hidden="true">
              <path d="M6 1.2A3.2 3.2 0 1 0 6.6 5L3.6 4Z" fill="#f01414" />
              <path d="M10.8 0A2.8 2.8 0 0 1 11.6 5.4L10.6 8L9.8 5.4A2.8 2.8 0 0 1 10.8 0Z" fill="#f01414" />
            </svg>
          </Footer>
        </MainColumn>
        <Sidebar>
          <Legend>
            {legend.map(([kind, label]) => (
              <LegendItem key={kind}>
                <svg width="17" height="23" viewBox="-10 -10 20 29" aria-hidden="true"><PinShape kind={kind} /></svg>
                {label}
              </LegendItem>
            ))}
          </Legend>
          <Activity>
            {activity.map(([who, what]) => (
              <ActivityItem key={who + what}><b>{who}</b> {what}</ActivityItem>
            ))}
          </Activity>
        </Sidebar>
      </WideBody>
    </Screen>
  </Device>
);

export default function App() {
  return (
    <>
      <GlobalStyle />
      <Stage>
        <Phone />
        <Tablet />
        <WideTablet />
      </Stage>
    </>
  );
}
